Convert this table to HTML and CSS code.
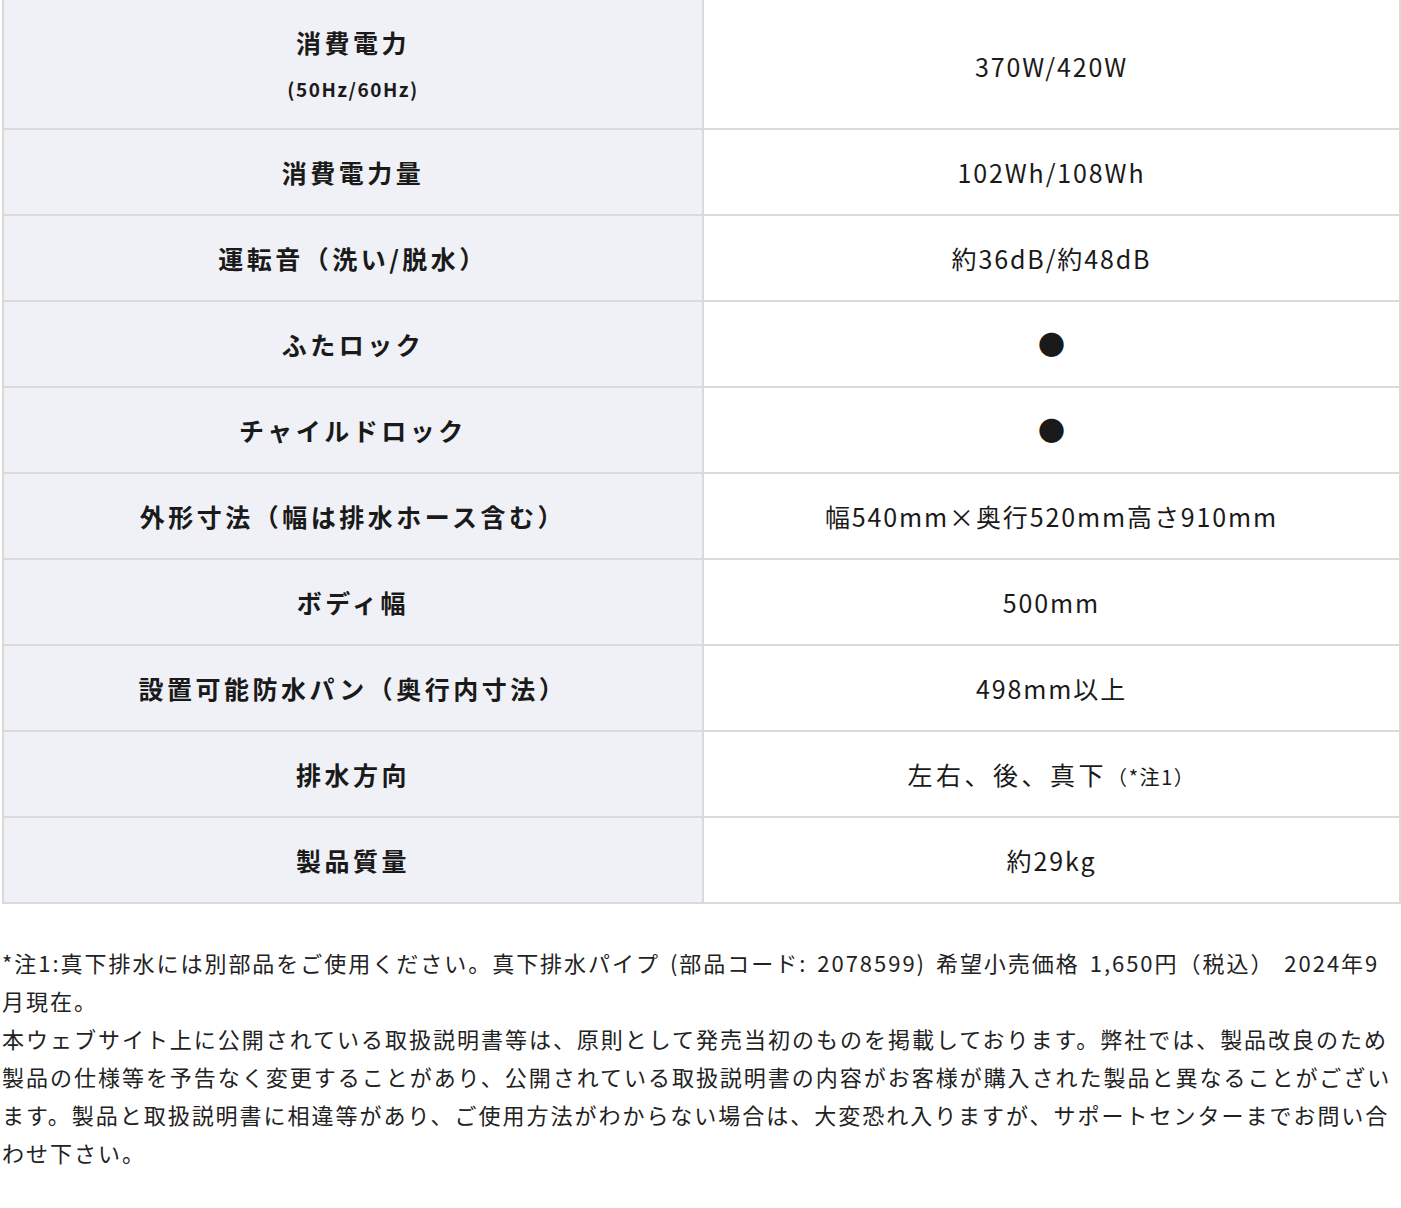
FILE: index.html
```html
<!doctype html>
<html lang="ja">
<head>
  <meta charset="utf-8" />
  <meta name="viewport" content="width=device-width,initial-scale=1" />
  <title>仕様</title>
  <link rel="stylesheet" href="styles.css">
</head>
<body>
<div class="wrapper">

  <table class="spec">
    <tr class="tall">
      <th>消費電力<span class="sub">(50Hz/60Hz)</span></th>
      <td>370W/420W</td>
    </tr>
    <tr>
      <th>消費電力量</th>
      <td>102Wh/108Wh</td>
    </tr>
    <tr>
      <th>運転音（洗い/脱水）</th>
      <td>約36dB/約48dB</td>
    </tr>
    <tr>
      <th>ふたロック</th>
      <td><span class="dot">●</span></td>
    </tr>
    <tr>
      <th>チャイルドロック</th>
      <td><span class="dot">●</span></td>
    </tr>
    <tr>
      <th>外形寸法（幅は排水ホース含む）</th>
      <td>幅540mm×奥行520mm高さ910mm</td>
    </tr>
    <tr>
      <th>ボディ幅</th>
      <td>500mm</td>
    </tr>
    <tr>
      <th>設置可能防水パン（奥行内寸法）</th>
      <td>498mm以上</td>
    </tr>
    <tr>
      <th>排水方向</th>
      <td class="wide">左右、後、真下<span class="note">（*注1）</span></td>
    </tr>
    <tr>
      <th>製品質量</th>
      <td>約29kg</td>
    </tr>
  </table>

  <p class="notes">
    *注1:真下排水には別部品をご使用ください。真下排水パイプ (部品コード: 2078599) 希望小売価格 1,650円（税込） 2024年9月現在。<br>
    本ウェブサイト上に公開されている取扱説明書等は、原則として発売当初のものを掲載しております。弊社では、製品改良のため製品の仕様等を予告なく変更することがあり、公開されている取扱説明書の内容がお客様が購入された製品と異なることがございます。製品と取扱説明書に相違等があり、ご使用方法がわからない場合は、大変恐れ入りますが、サポートセンターまでお問い合わせ下さい。
  </p>

</div>
</body>
</html>
```

FILE: styles.css
```css
:root{
  --line:#dadada;
  --head-bg:#f0f1f6;
  --text:#1a1a1a;
}

*{box-sizing:border-box;margin:0;padding:0}

body{
  font-family:"Noto Sans CJK JP","Noto Sans",sans-serif;
  color:var(--text);
  background:#fff;
}

.wrapper{
  padding:0 0 0 2px;
  width:1401px;
}

.spec{
  width:1399px;
  border-collapse:collapse;
  table-layout:fixed;
  border:2px solid var(--line);
  border-top:none;
}

.spec th,
.spec td{
  height:86px;
  border:2px solid var(--line);
  text-align:center;
  vertical-align:middle;
  font-size:25px;
  line-height:1.4;
}

.spec tr:first-child th,
.spec tr:first-child td{border-top:none}

.spec th{
  width:700px;
  background:var(--head-bg);
  font-weight:700;
  letter-spacing:0.14em;
}

.spec td{
  font-weight:400;
  letter-spacing:0.075em;
}

.spec td.wide{letter-spacing:0.14em}

.spec tr.tall th,
.spec tr.tall td{
  height:129px;
}

.spec tr.tall td{padding-top:5px}

.sub{
  display:block;
  font-size:19px;
  margin-top:16px;
  letter-spacing:0.08em;
}

.note{
  font-size:20px;
  letter-spacing:0.08em;
}

.dot{
  font-size:27px;
  letter-spacing:0;
}

.notes{
  margin-top:39px;
  font-size:22px;
  line-height:38px;
  letter-spacing:0.09em;
  word-spacing:3px;
  color:#222;
}
```
